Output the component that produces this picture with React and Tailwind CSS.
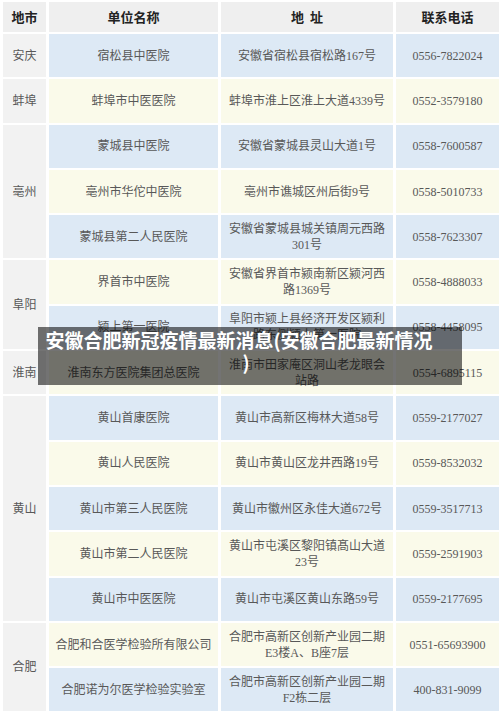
import React from "react";

const BLUE = "bg-[#dde9f5]";
const CREAM = "bg-[#fafaea]";

const groups = [
  { city: "安庆", rows: [["宿松县中医院", ["安徽省宿松县宿松路167号"], "0556-7822024"]] },
  { city: "蚌埠", rows: [["蚌埠市中医医院", ["蚌埠市淮上区淮上大道4339号"], "0552-3579180"]] },
  {
    city: "亳州",
    rows: [
      ["蒙城县中医院", ["安徽省蒙城县灵山大道1号"], "0558-7600587"],
      ["亳州市华佗中医院", ["亳州市谯城区州后街9号"], "0558-5010733"],
      ["蒙城县第二人民医院", ["安徽省蒙城县城关镇周元西路", "301号"], "0558-7623307"],
    ],
  },
  {
    city: "阜阳",
    rows: [
      ["界首市中医院", ["安徽省界首市颍南新区颍河西", "路1369号"], "0558-4888033"],
      ["颍上第一医院", ["阜阳市颍上县经济开发区颍利", "路东侧颍上第一医院"], "0558-4458095"],
    ],
  },
  { city: "淮南", rows: [["淮南东方医院集团总医院", ["淮南市田家庵区洞山老龙眼会", "站路"], "0554-6895115"]] },
  {
    city: "黄山",
    rows: [
      ["黄山首康医院", ["黄山市高新区梅林大道58号"], "0559-2177027"],
      ["黄山人民医院", ["黄山市黄山区龙井西路19号"], "0559-8532032"],
      ["黄山市第三人民医院", ["黄山市徽州区永佳大道672号"], "0559-3517713"],
      ["黄山市第二人民医院", ["黄山市屯溪区黎阳镇髙山大道", "23号"], "0559-2591903"],
      ["黄山市中医医院", ["黄山市屯溪区黄山东路59号"], "0559-2177695"],
    ],
  },
  {
    city: "合肥",
    rows: [
      ["合肥和合医学检验所有限公司", ["合肥市高新区创新产业园二期", "E3楼A、B座7层"], "0551-65693900"],
      ["合肥诺为尔医学检验实验室", ["合肥市高新区创新产业园二期", "F2栋二层"], "400-831-9099"],
    ],
  },
];

const spanClass = {
  1: "row-span-1",
  2: "row-span-2",
  3: "row-span-3",
  5: "row-span-5",
};

export default function App() {
  let idx = 0;
  const cells = [];
  groups.forEach((g, gi) => {
    g.rows.forEach((r, ri) => {
      const bg = idx % 2 === 0 ? BLUE : CREAM;
      idx++;
      if (ri === 0) {
        cells.push(
          <div
            key={`c${gi}`}
            className={`${spanClass[g.rows.length]} bg-[#f2f2f2] flex items-center justify-center`}
          >
            {g.city}
          </div>
        );
      }
      cells.push(
        <div key={`n${gi}-${ri}`} className={`${bg} flex items-center justify-center px-1 text-center`}>
          {r[0]}
        </div>
      );
      cells.push(
        <div
          key={`a${gi}-${ri}`}
          className={`${bg} flex flex-col items-center justify-center text-center leading-[16px]`}
        >
          {r[1].map((l, li) => (
            <span key={li}>{l}</span>
          ))}
        </div>
      );
      cells.push(
        <div key={`p${gi}-${ri}`} className={`${bg} flex items-center justify-center`}>
          {r[2]}
        </div>
      );
    });
  });

  return (
    <div className="relative w-[500px] h-[712px] overflow-hidden bg-white">
      <div className="pt-[2px] pl-[3px] grid grid-cols-[43px_169px_172px_103px] grid-rows-[30px_repeat(15,43.3px)] gap-x-[3px] gap-y-[2px] text-[12px] text-[#585858] font-['Liberation_Serif','Noto_Sans_CJK_SC',serif]">
        <div className="bg-[#efefef] flex items-center justify-center font-['Noto_Sans_CJK_SC',sans-serif] font-bold text-[13px] text-[#222]">
          地市
        </div>
        <div className="bg-[#efefef] flex items-center justify-center font-['Noto_Sans_CJK_SC',sans-serif] font-bold text-[13px] text-[#222]">
          单位名称
        </div>
        <div className="bg-[#efefef] flex items-center justify-center font-['Noto_Sans_CJK_SC',sans-serif] font-bold text-[13px] text-[#222] whitespace-pre">
          地  址
        </div>
        <div className="bg-[#efefef] flex items-center justify-center font-['Noto_Sans_CJK_SC',sans-serif] font-bold text-[13px] text-[#222]">
          联系电话
        </div>
        {cells}
      </div>

      <div className="absolute left-[38px] top-[327px] w-[424px] h-[58px] bg-black/55 pt-[2px] pr-[22px] text-center text-white font-bold text-[19px] leading-[22px] font-['Noto_Sans_CJK_SC',sans-serif]">
        <div>安徽合肥新冠疫情最新消息(安徽合肥最新情况</div>
        <div className="pl-[14px]">)</div>
      </div>
    </div>
  );
}
